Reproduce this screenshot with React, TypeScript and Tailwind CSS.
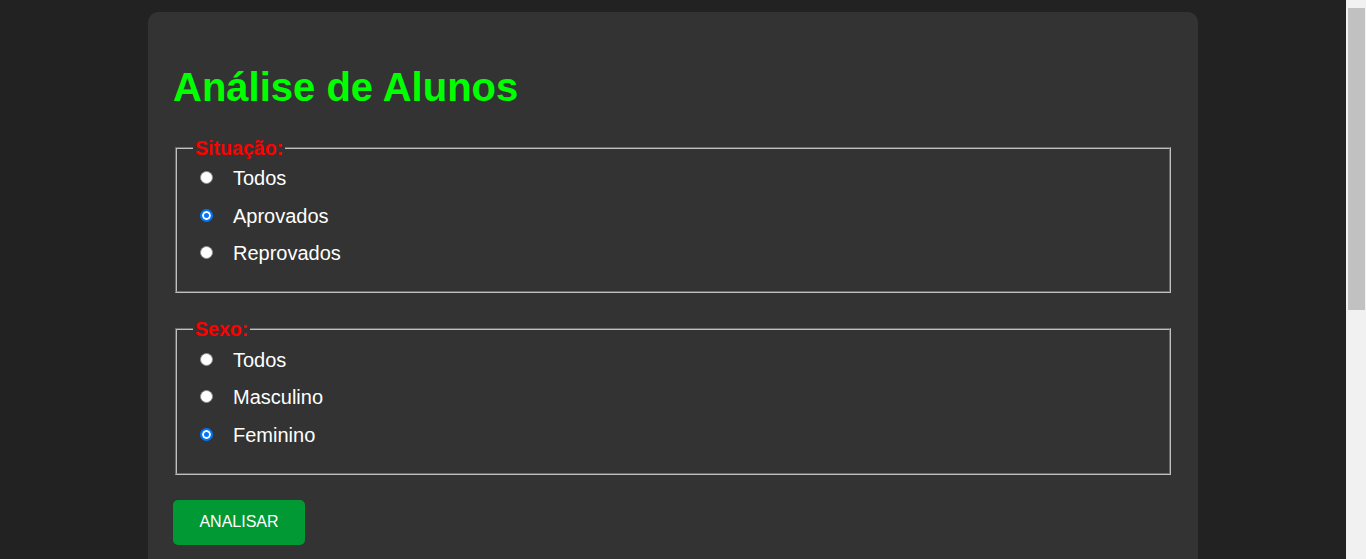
import { useState } from "react";

interface Group {
  name: string;
  legend: string;
  options: string[];
}

const groups: Group[] = [
  { name: "situacao", legend: "Situação:", options: ["Todos", "Aprovados", "Reprovados"] },
  { name: "sexo", legend: "Sexo:", options: ["Todos", "Masculino", "Feminino"] },
];

const FilterGroup: React.FC<{
  group: Group;
  value: string;
  onChange: (v: string) => void;
}> = ({ group, value, onChange }) => {
  return (
    <fieldset className="mx-[2px] mb-[25px] border-2 [border-style:groove] border-[#c0c0c0] pl-[16px] pr-4 pt-2 pb-[26.5px]">
      {/* Legend */}
      <legend className="px-[2px] text-[19.6px] leading-[22px] font-bold text-[#ff0000]">
        {group.legend}
      </legend>

      <div className="flex flex-col gap-[14.5px]">
        {group.options.map((opt) => (
          <label key={opt} className="flex items-center h-[23px] text-[20px] text-white cursor-pointer">
            <input
              type="radio"
              name={group.name}
              checked={value === opt}
              onChange={() => onChange(opt)}
              className="appearance-none shrink-0 ml-[7px] mr-[20px] -mt-[1px] w-[13px] h-[13px] rounded-full bg-white border border-[#8f8f8f] checked:border-2 checked:border-[#0075ff] checked:bg-[#0075ff] checked:shadow-[inset_0_0_0_2px_#ffffff]"
            />
            {opt}
          </label>
        ))}
      </div>
    </fieldset>
  );
};

export default function App() {
  const [situacao, setSituacao] = useState("Aprovados");
  const [sexo, setSexo] = useState("Feminino");

  return (
    <div className="flex h-screen overflow-hidden bg-[#222222] font-['Liberation_Sans',Arial,sans-serif]">
      <div className="flex-1 pt-3 pb-3">
        <div className="mx-auto w-[1050px] min-h-[1000px] rounded-[10px] bg-[#333333] px-[25px] pt-[25px] pb-[25px]">
          {/* Title */}
          <h1 className="my-[26.8px] text-[40px] leading-[46px] font-bold text-[#00ff00]">
            Análise de Alunos
          </h1>

          <FilterGroup group={groups[0]} value={situacao} onChange={setSituacao} />
          <FilterGroup group={groups[1]} value={sexo} onChange={setSexo} />

          <button className="h-[45px] w-[132px] rounded-[5px] bg-[#009933] text-[16px] text-white">
            ANALISAR
          </button>
        </div>
      </div>

      {/* scrollbar */}
      <div className="w-[20px] shrink-0 bg-[#f1f1f1] pt-[8px] pl-[2px] pr-[1px]">
        <div className="h-[302px] bg-[#c1c1c1]" />
      </div>
    </div>
  );
}
